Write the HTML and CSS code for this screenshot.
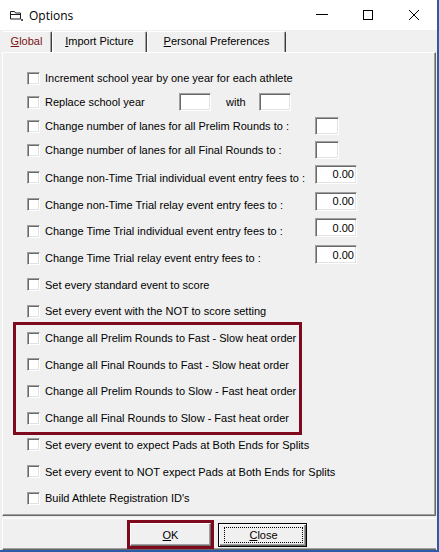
FILE: index.html
```html
<!DOCTYPE html>
<html lang="en">
<head>
    <meta charset="UTF-8">
    <meta name="viewport" content="width=device-width, initial-scale=1.0">
    <title>Options</title>
    <link rel="stylesheet" href="styles.css">
</head>
<body>
    <div class="window">
        <div class="titlebar">
            <svg class="app-icon" width="13" height="11" viewBox="0 0 13 11">
                <path d="M0.5 1.5h4l1 1.5h5v6h-10z" fill="none" stroke="#1e1e1e"/>
                <path d="M1 4.5h10" stroke="#1e1e1e"/>
                <rect x="11" y="9" width="2" height="2" fill="#555"/>
            </svg>
            <span class="title">Options</span>
            <div class="caption-btn">
                <svg width="12" height="10" viewBox="0 0 12 10"><path d="M0 4.5h12" stroke="#000"/></svg>
            </div>
            <div class="caption-btn">
                <svg width="10" height="10" viewBox="0 0 10 10"><rect x="0.5" y="0.5" width="9" height="9" fill="none" stroke="#000"/></svg>
            </div>
            <div class="caption-btn">
                <svg width="10" height="10" viewBox="0 0 10 10"><path d="M0 0L10 10M10 0L0 10" stroke="#000"/></svg>
            </div>
        </div>

        <div class="tabs">
            <div class="tab tab-global active"><span><u>G</u>lobal</span></div>
            <div class="tab tab-import"><span><u>I</u>mport Picture</span></div>
            <div class="tab tab-personal"><span><u>P</u>ersonal Preferences</span></div>
        </div>

        <div class="panel">
            <div class="rows-top">
                <label class="row tight"><input type="checkbox" class="check"><span>Increment school year by one year for each athlete</span></label>
                <label class="row tight">
                    <input type="checkbox" class="check"><span class="label-short">Replace school year</span>
                    <input type="text" class="field">
                    <span class="with">with</span>
                    <input type="text" class="field">
                </label>
                <label class="row tight"><input type="checkbox" class="check"><span class="label-wide">Change number of lanes for all Prelim Rounds to :</span><input type="text" class="field lanes"></label>
                <label class="row tight"><input type="checkbox" class="check"><span class="label-wide">Change number of lanes for all Final Rounds to :</span><input type="text" class="field lanes"></label>
            </div>

            <div class="rows-main">
                <label class="row"><input type="checkbox" class="check"><span class="label-wide">Change non-Time Trial individual event entry fees to :</span><input type="text" class="field fee" value="0.00"></label>
                <label class="row"><input type="checkbox" class="check"><span class="label-wide">Change non-Time Trial relay event entry fees to :</span><input type="text" class="field fee" value="0.00"></label>
                <label class="row"><input type="checkbox" class="check"><span class="label-wide">Change Time Trial individual event entry fees to :</span><input type="text" class="field fee" value="0.00"></label>
                <label class="row"><input type="checkbox" class="check"><span class="label-wide">Change Time Trial relay event entry fees to :</span><input type="text" class="field fee" value="0.00"></label>
                <label class="row"><input type="checkbox" class="check"><span>Set every standard event to score</span></label>
                <label class="row"><input type="checkbox" class="check"><span>Set every event with the NOT to score setting</span></label>

                <div class="highlight">
                    <label class="row"><input type="checkbox" class="check"><span>Change all Prelim Rounds to Fast - Slow heat order</span></label>
                    <label class="row"><input type="checkbox" class="check"><span>Change all Final Rounds to Fast - Slow heat order</span></label>
                    <label class="row"><input type="checkbox" class="check"><span>Change all Prelim Rounds to Slow - Fast heat order</span></label>
                    <label class="row"><input type="checkbox" class="check"><span>Change all Final Rounds to Slow - Fast heat order</span></label>
                </div>

                <label class="row"><input type="checkbox" class="check"><span>Set every event to expect Pads at Both Ends for Splits</span></label>
                <label class="row"><input type="checkbox" class="check"><span>Set every event to NOT expect Pads at Both Ends for Splits</span></label>
                <label class="row"><input type="checkbox" class="check"><span>Build Athlete Registration ID's</span></label>
            </div>
        </div>

        <div class="footer">
            <div class="ok-mark">
                <button class="btn btn-ok"><u>O</u>K</button>
            </div>
            <button class="btn btn-close"><span class="focus"><u>C</u>lose</span></button>
        </div>
    </div>
</body>
</html>
```

FILE: styles.css
```css
body {
    margin: 0;
    background-color: #f0f0f0;
    font-family: "Liberation Sans", Arial, sans-serif;
    font-size: 11px;
    color: #000;
}
.window {
    width: 437px;
    height: 550px;
    display: flex;
    flex-direction: column;
    border-right: 2px solid #2b5ca8;
    border-bottom: 2px solid #2b5ca8;
    background-color: #f0f0f0;
}

/* title bar */
.titlebar {
    height: 30px;
    flex: none;
    display: flex;
    align-items: center;
    background-color: #fff;
}
.app-icon {
    margin-left: 10px;
    margin-right: 6px;
}
.title {
    flex: 1;
    font-family: "Open Sans", "Noto Sans", sans-serif;
    font-size: 12px;
}
.caption-btn {
    width: 46px;
    height: 30px;
    display: flex;
    align-items: center;
    justify-content: center;
}

/* tabs */
.tabs {
    height: 22px;
    flex: none;
    display: flex;
    align-items: flex-end;
    padding-left: 2px;
}
.tab {
    height: 21px;
    box-sizing: border-box;
    display: flex;
    align-items: center;
    justify-content: center;
    padding-bottom: 2px;
    border-top: 1px solid #fff;
    border-left: 1px solid #fff;
    border-right: 1px solid #3c3c3c;
    border-radius: 2px 2px 0 0;
    box-shadow: inset -1px 0 #a0a0a0;
}
.tab.active {
    color: #7d1414;
    border-left: none;
}
.tab-global {
    width: 50px;
}
.tab-import {
    width: 95px;
}
.tab-personal {
    width: 139px;
}

/* page */
.panel {
    flex: none;
    margin-left: 2px;
    width: 434px;
    height: 464px;
    box-sizing: border-box;
    padding-top: 13px;
    border-top: 1px solid #fff;
    border-left: 1px solid #fff;
    border-right: 1px solid #696969;
    border-bottom: 1px solid #696969;
    box-shadow: inset -1px -1px #a0a0a0;
}
.row {
    display: flex;
    align-items: center;
    height: 26.7px;
    padding-left: 24px;
    white-space: nowrap;
}
.row.tight {
    height: 24px;
}
.rows-main {
    margin-top: 2.65px;
}
.check {
    appearance: none;
    flex: none;
    width: 13px;
    height: 13px;
    margin: 0 5px 0 0;
    box-sizing: border-box;
    background-color: #fff;
    border: 1px solid;
    border-color: #a0a0a0 #fff #fff #a0a0a0;
    box-shadow: inset 1px 1px #696969, inset -1px -1px #e3e3e3;
}
.label-short {
    flex: none;
    width: 134px;
}
.label-wide {
    flex: none;
    width: 270px;
}
.with {
    width: 20px;
    margin-left: 15px;
    margin-right: 13px;
}
.field {
    flex: none;
    width: 32px;
    height: 18px;
    margin: 0;
    padding: 0 2px;
    box-sizing: border-box;
    background-color: #fff;
    border: 1px solid;
    border-color: #a0a0a0 #fff #fff #a0a0a0;
    box-shadow: inset 1px 1px #696969, inset -1px -1px #e3e3e3;
    font-family: "Liberation Sans", Arial, sans-serif;
    font-size: 11px;
    outline: none;
}
.field.lanes {
    width: 24px;
}
.field.fee {
    width: 42px;
    height: 19px;
    margin-bottom: 7px;
    text-align: right;
}

/* annotation box */
.highlight {
    margin-left: 13px;
    width: 283px;
    outline: 3px solid #7f0a1e;
}
.highlight .row {
    padding-left: 11px;
}

/* buttons */
.footer {
    flex: 1;
    margin: 2px 1px 0 2px;
    padding: 1px 5px 0 0;
    display: flex;
    align-items: center;
    justify-content: center;
    border-top: 1px solid #fff;
    border-left: 1px solid #fff;
    border-bottom: 1px solid #696969;
    box-shadow: inset 0 -1px #a0a0a0;
}
.ok-mark {
    display: flex;
    margin-right: 4px;
    border: 3px solid #7f0a1e;
}
.btn {
    margin: 0;
    padding: 0;
    box-sizing: border-box;
    background-color: #f0f0f0;
    font-family: "Liberation Sans", Arial, sans-serif;
    font-size: 11px;
    color: #000;
    border: 1px solid;
    border-color: #fff #696969 #696969 #fff;
    box-shadow: inset -1px -1px #a0a0a0;
}
.btn-ok {
    width: 81px;
    height: 23px;
}
.btn-close {
    width: 89px;
    height: 24px;
    padding: 3px 3px 3px 5px;
    border: 1px solid #000;
    box-shadow: inset 1px 1px #fff, inset -1px -1px #696969, inset -2px -2px #a0a0a0;
}
.focus {
    display: flex;
    align-items: center;
    justify-content: center;
    height: 100%;
    box-sizing: border-box;
    border: 1px dotted #000;
}
```
